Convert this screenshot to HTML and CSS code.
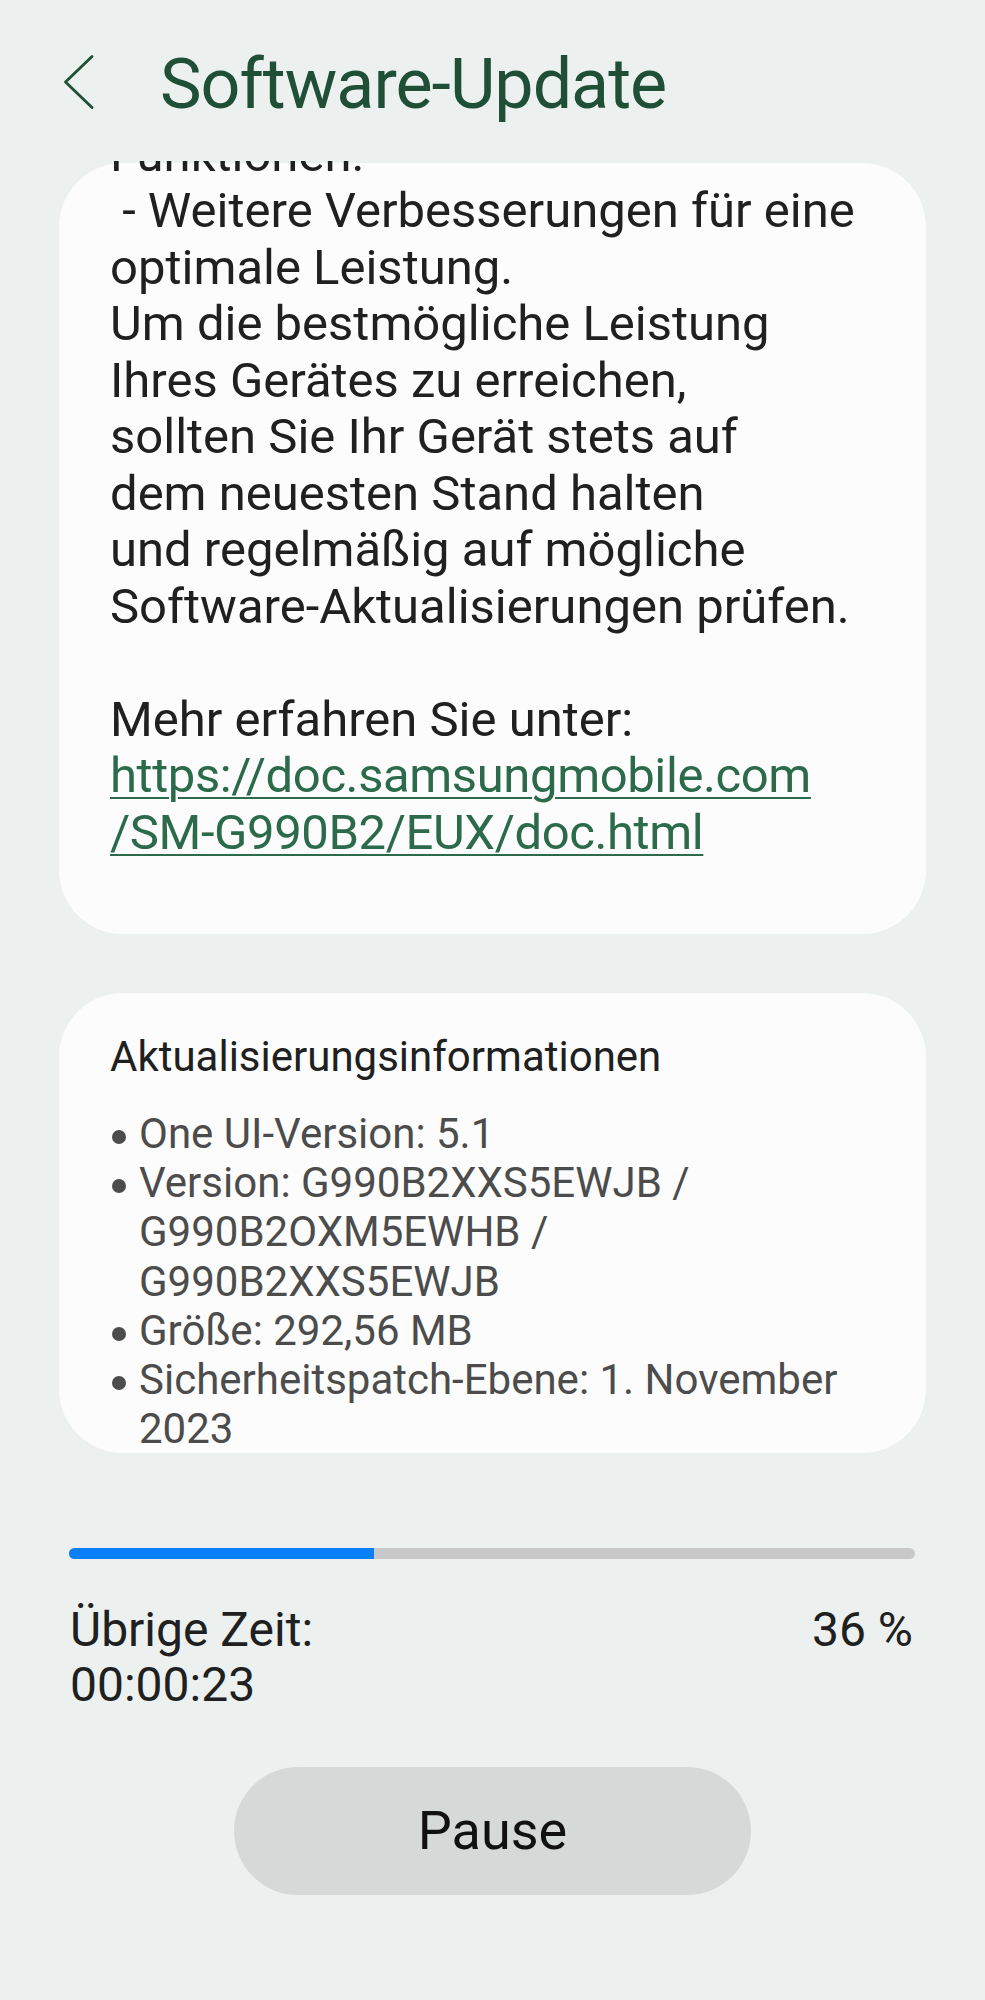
FILE: index.html
```html
<!DOCTYPE html>
<html lang="de">
<head>
  <meta charset="UTF-8">
  <meta name="viewport" content="width=device-width, initial-scale=1">
  <title>Software-Update</title>
  <link rel="stylesheet" href="styles.css">
</head>
<body>

  <div class="screen">
    <!-- Kopfzeile -->
    <header class="topbar">
      <button class="back" aria-label="Zurück">
        <svg width="30" height="54" viewBox="0 0 30 54">
          <path d="M28 1.5 L1.5 27 L28 52.5" />
        </svg>
      </button>
      <h1 class="title">Software-Update</h1>
    </header>

    <!-- Scrollbereich -->
    <main class="scroll">
      <section class="card notes">
        <p class="notes-text">Funktionen.<br>&nbsp;- Weitere Verbesserungen für eine<br>optimale Leistung.<br>Um die bestmögliche Leistung<br>Ihres Gerätes zu erreichen,<br>sollten Sie Ihr Gerät stets auf<br>dem neuesten Stand halten<br>und regelmäßig auf mögliche<br>Software-Aktualisierungen prüfen.<br><br>Mehr erfahren Sie unter:<br><a href="#">https://doc.samsungmobile.com<br>/SM-G990B2/EUX/doc.html</a></p>
      </section>

      <section class="card info">
        <h2>Aktualisierungsinformationen</h2>
        <ul class="info-list">
          <li><span>One UI-Version: 5.1</span></li>
          <li><span>Version: G990B2XXS5EWJB /<br>G990B2OXM5EWHB /<br>G990B2XXS5EWJB</span></li>
          <li><span>Größe: 292,56 MB</span></li>
          <li><span>Sicherheitspatch-Ebene: 1. November<br>2023</span></li>
        </ul>
      </section>
    </main>

    <!-- Fortschritt -->
    <div class="bar">
      <div class="fill" style="width: 36%"></div>
    </div>

    <div class="status">
      <div>Übrige Zeit:<br>00:00:23</div>
      <div>36 %</div>
    </div>

    <div class="actions">
      <button class="pause">Pause</button>
    </div>
  </div>

</body>
</html>
```

FILE: styles.css
```css
body {
  margin: 0;
  font-family: Roboto, 'Noto Sans', sans-serif;
  background: #ecf1ef;
  color: #202020;
}

.screen {
  width: 985px;
  min-height: 2000px;
}

/* Kopfzeile */
.topbar {
  height: 161px;
  box-sizing: border-box;
  padding: 49px 0 0 64px;
  display: flex;
  align-items: flex-start;
}

.back {
  border: none;
  background: none;
  padding: 0;
  margin-top: 6px;
  width: 30px;
  height: 54px;
  cursor: pointer;
}

.back svg {
  display: block;
}

.back path {
  fill: none;
  stroke: #1f5037;
  stroke-width: 2.8;
  stroke-linecap: round;
  stroke-linejoin: round;
}

.title {
  margin: 0 0 0 66px;
  font-size: 70px;
  line-height: 70px;
  font-weight: 400;
  letter-spacing: -1px;
  color: #1f5037;
}

/* Karten */
.scroll {
  height: 1339px;
  box-sizing: border-box;
  padding-top: 2px;
  overflow: hidden;
}

.card {
  display: flow-root;
  margin: 0 59px;
  background: #fcfcfc;
  border-radius: 64px;
}

.notes {
  padding: 0 30px 73px 51px;
}

.notes-text {
  margin: -36.5px 0 0;
  font-size: 49px;
  line-height: 56.5px;
  color: #202020;
}

.notes-text a {
  color: #2b6a4b;
  text-decoration: underline;
  text-decoration-thickness: 2px;
  text-underline-offset: 5px;
  letter-spacing: -0.4px;
}

.info {
  margin-top: 59px;
  padding: 39px 30px 0 51px;
}

.info h2 {
  margin: 0;
  font-size: 42px;
  line-height: 49.2px;
  font-weight: 400;
  color: #202020;
}

.info-list {
  list-style: none;
  margin: 27.8px 0 0;
  padding: 0;
  font-size: 42px;
  line-height: 49.2px;
  color: #4c4c4c;
}

.info-list li {
  display: grid;
  grid-template-columns: 29px 1fr;
}

.info-list li::before {
  content: '';
  width: 14px;
  height: 14px;
  margin: 21px 0 0 2px;
  border-radius: 50%;
  background: #4c4c4c;
}

/* Fortschritt */
.bar {
  margin: 48px 70px 0 69px;
  height: 11px;
  border-radius: 6px;
  background: #c8c8c8;
  overflow: hidden;
}

.fill {
  height: 100%;
  background: #0a7ff7;
}

.status {
  margin: 43.4px 72px 0 70px;
  display: flex;
  justify-content: space-between;
  font-size: 48px;
  line-height: 55px;
  color: #202020;
}

.actions {
  margin-top: 54.6px;
  display: flex;
  justify-content: center;
}

.pause {
  width: 517px;
  height: 128px;
  border: none;
  border-radius: 64px;
  background: #d5d9d8;
  font-family: Roboto, 'Noto Sans', sans-serif;
  font-size: 54px;
  color: #111;
  cursor: pointer;
}
```
